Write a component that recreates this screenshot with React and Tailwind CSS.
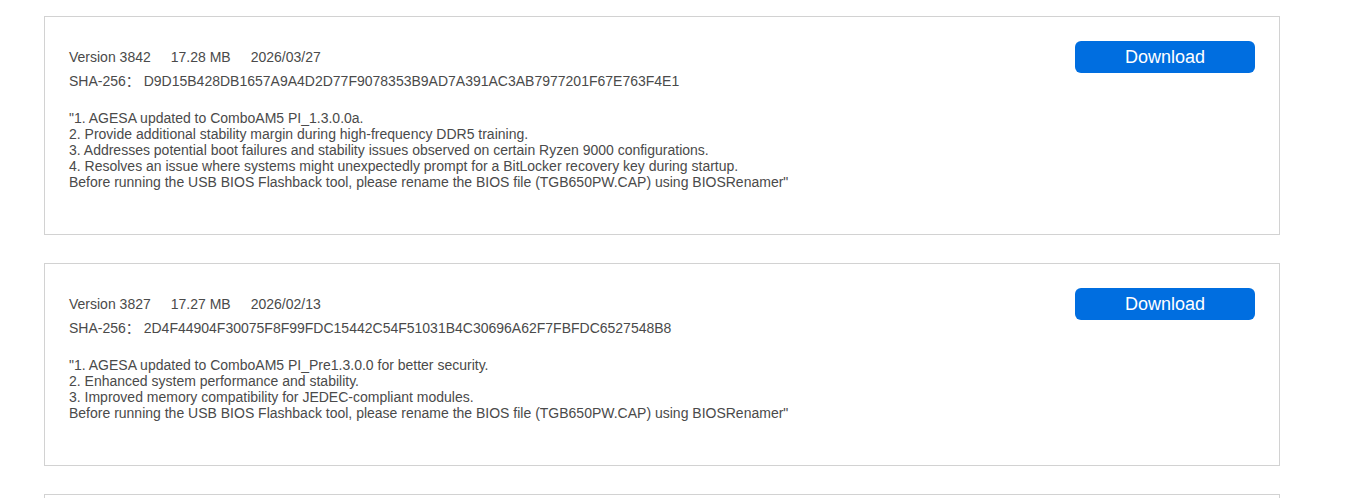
import React from 'react'

const releases = [
  {
    version: '3842',
    size: '17.28 MB',
    date: '2026/03/27',
    sha: 'D9D15B428DB1657A9A4D2D77F9078353B9AD7A391AC3AB7977201F67E763F4E1',
    notes: [
      '"1. AGESA updated to ComboAM5 PI_1.3.0.0a.',
      '2. Provide additional stability margin during high-frequency DDR5 training.',
      '3. Addresses potential boot failures and stability issues observed on certain Ryzen 9000 configurations.',
      '4. Resolves an issue where systems might unexpectedly prompt for a BitLocker recovery key during startup.',
      'Before running the USB BIOS Flashback tool, please rename the BIOS file (TGB650PW.CAP) using BIOSRenamer"',
    ],
  },
  {
    version: '3827',
    size: '17.27 MB',
    date: '2026/02/13',
    sha: '2D4F44904F30075F8F99FDC15442C54F51031B4C30696A62F7FBFDC6527548B8',
    notes: [
      '"1. AGESA updated to ComboAM5 PI_Pre1.3.0.0 for better security.',
      '2. Enhanced system performance and stability.',
      '3. Improved memory compatibility for JEDEC-compliant modules.',
      'Before running the USB BIOS Flashback tool, please rename the BIOS file (TGB650PW.CAP) using BIOSRenamer"',
    ],
  },
]

function ReleaseCard({ r }){
  return (
    <div className="border border-[#d2d2d2] bg-white p-6 mb-7 flex items-start justify-between">
      <div className="text-[14px] text-[#4a4a4a]">
        <div className="leading-[32px] flex gap-5">
          <span>Version {r.version}</span>
          <span>{r.size}</span>
          <span>{r.date}</span>
        </div>
        <div className="leading-4">SHA-256：&nbsp;{r.sha}</div>
        <div className="mt-[21px] mb-5 leading-4">
          {r.notes.map((n, i) => <div key={i}>{n}</div>)}
        </div>
      </div>
      <button className="w-[180px] h-8 rounded-md bg-[#006ee0] text-white text-[18px] leading-8 shrink-0">
        Download
      </button>
    </div>
  )
}

export default function App(){
  return (
    <div className="min-h-screen bg-white font-['Liberation_Sans',Arial,'Noto_Sans_CJK_SC',sans-serif]">
      <div className="ml-[44px] w-[1236px] pt-4">
        {releases.map(r => <ReleaseCard key={r.version} r={r} />)}
        {/* next release card, only its top edge is in view */}
        <div className="border border-[#d2d2d2] h-[200px]"></div>
      </div>
    </div>
  )
}
